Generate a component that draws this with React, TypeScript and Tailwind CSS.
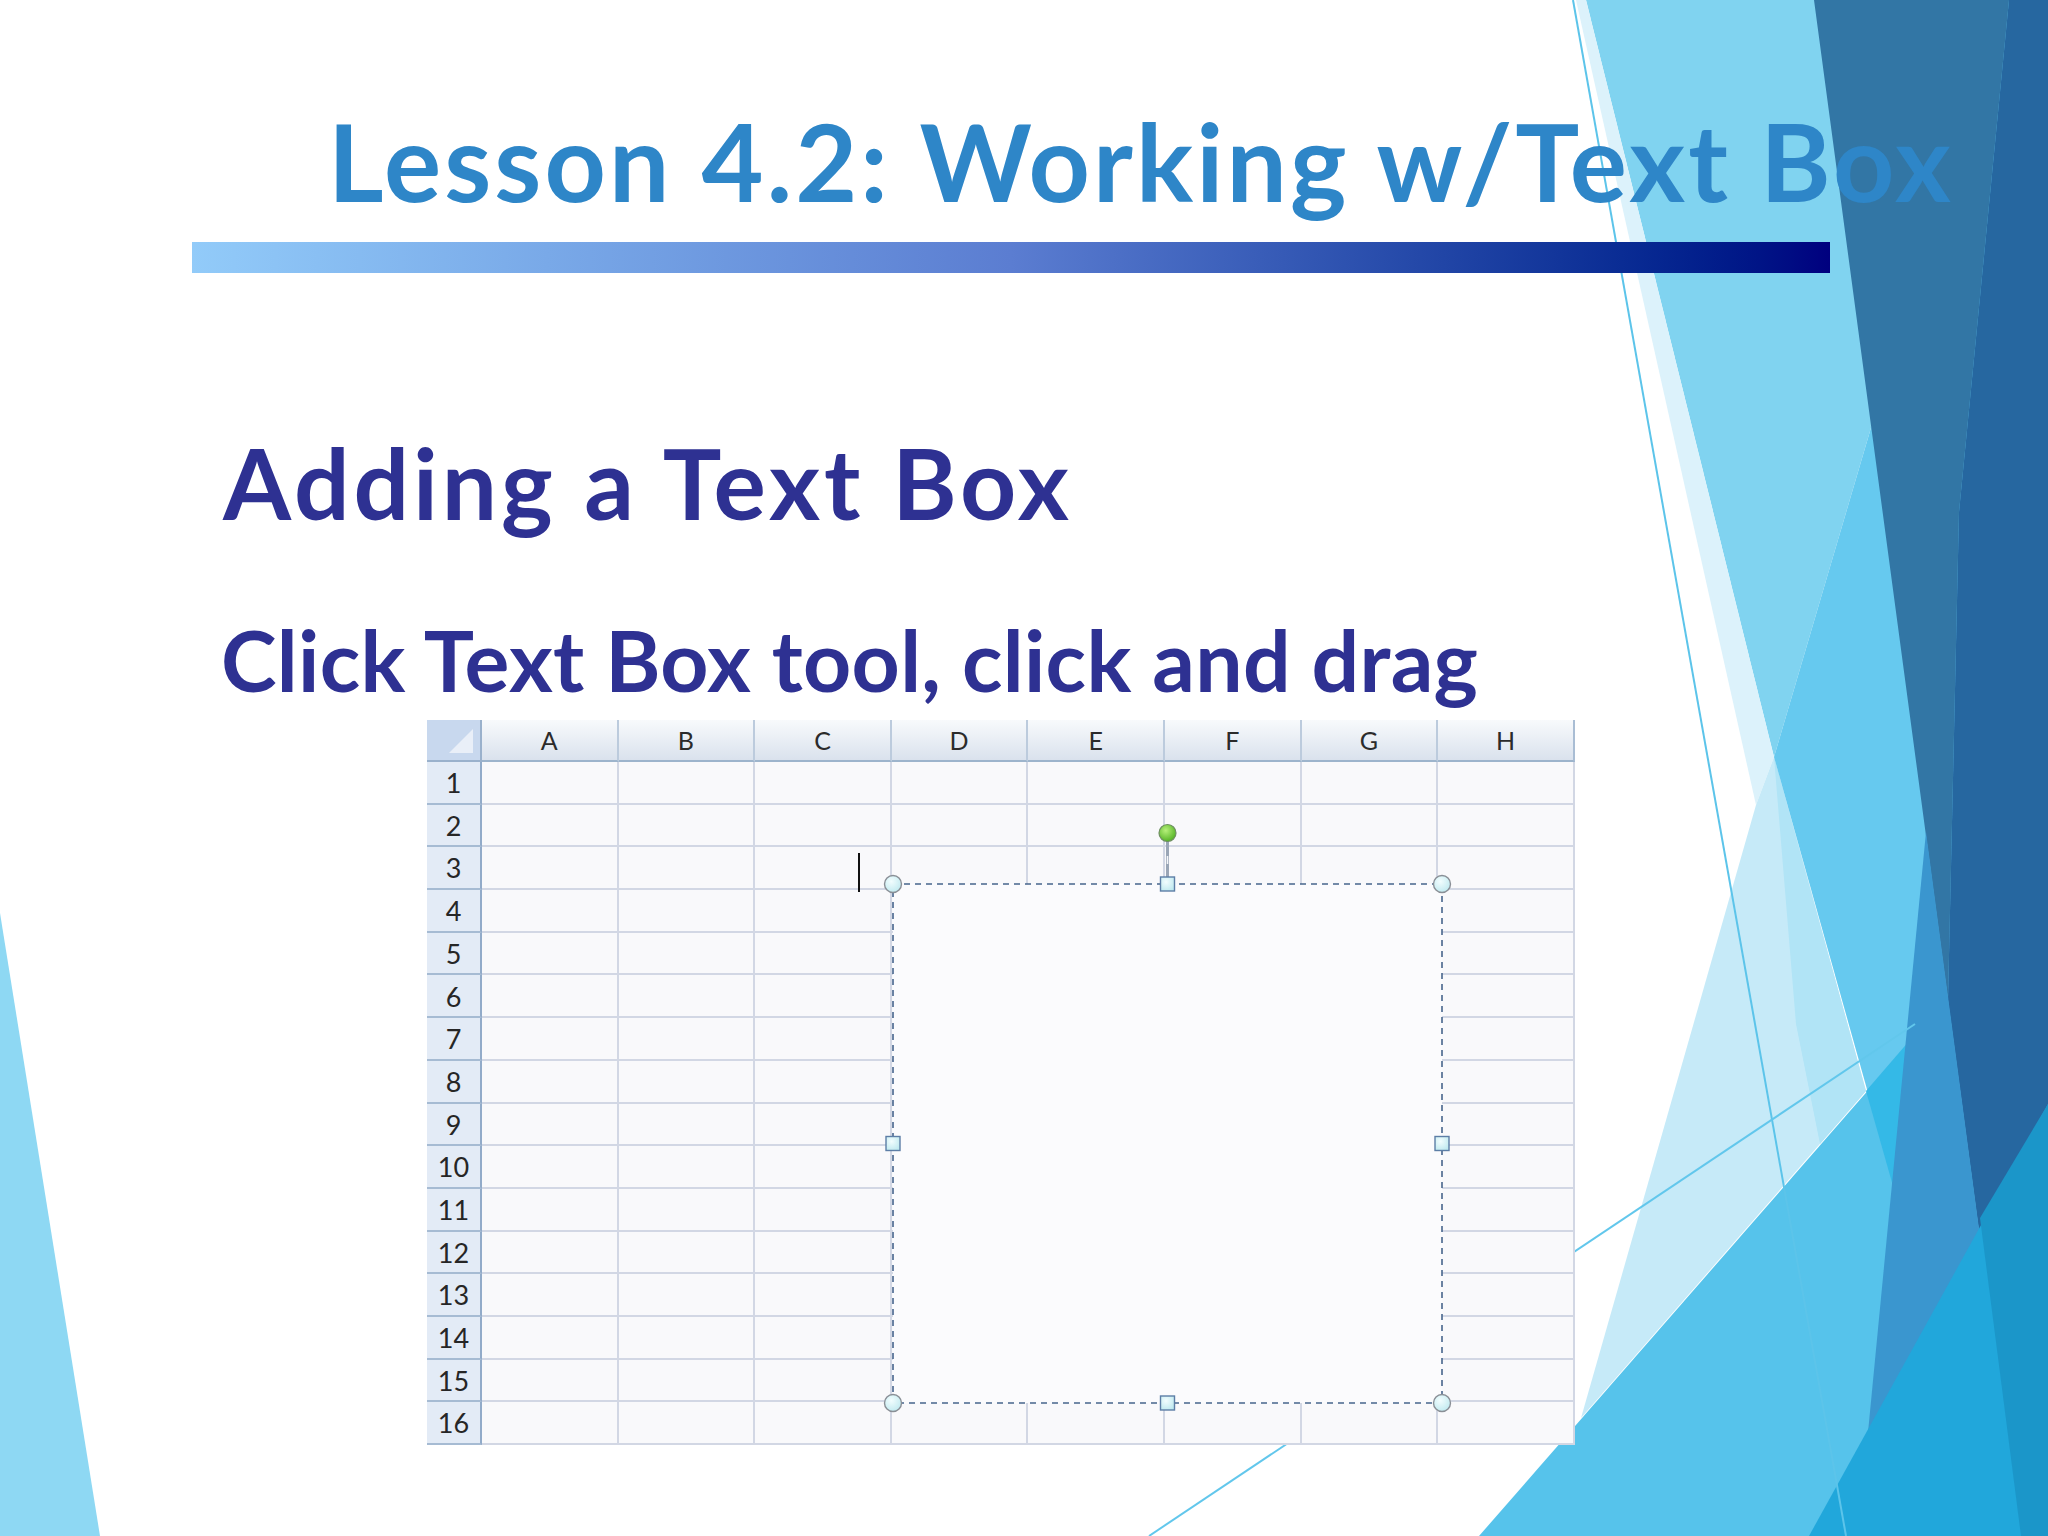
const COLS = ['A', 'B', 'C', 'D', 'E', 'F', 'G', 'H'];
const ROWS = Array.from({ length: 16 }, (_, i) => i + 1);

// slide theme decoration (facets on the right, sliver bottom-left)
function Backdrop() {
  return (
    <svg viewBox="0 0 2048 1536" className="absolute inset-0 h-full w-full">
      <polygon points="0,913 100,1536 0,1536" fill="#8ed8f3" />
      <polygon points="1586,0 1997,0 1774,757" fill="#80d3f0" />
      <polygon points="1576,0 1586,0 1774,757 1756,805" fill="#dcf2fb" />
      <polygon points="1756,805 1774,757 1866,1091 1581,1418" fill="#c6eaf8" />
      <polygon points="1774,757 1866,1091 1820,1144 1796,1024" fill="#b1e4f6" />
      <polygon points="1774,757 1997,0 2048,0 2048,1536 1992,1536" fill="#66c9ef" />
      <polygon points="1479,1536 1912,1040 1960,1536" fill="#56c3eb" />
      <polygon points="1866,1091 1910,1040 1893,1186" fill="#34b9e7" />
      <polygon points="1814,0 2009,0 1959,512 1948,1000" fill="#3276a5" />
      <polygon points="2009,0 2048,0 2048,1536 2020,1536 1948,1000 1959,512" fill="#2667a0" />
      <polygon points="1926,832 2020,1536 1858,1536" fill="#3a96cf" />
      <polygon points="2048,1104 1809,1536 2048,1536" fill="#21a7db" />
      <polygon points="1980,1218 2048,1104 2048,1536 2021,1536" fill="#1b96c9" />
      <line x1="1573" y1="0" x2="1846" y2="1536" stroke="#5cc4ea" strokeWidth="2" />
      <line x1="1149" y1="1536" x2="1915" y2="1024" stroke="#62c7ec" strokeWidth="2" />
    </svg>
  );
}

function SelectionOverlay() {
  const x0 = 466;
  const y0 = 164;
  const x1 = 1015;
  const y1 = 683;
  const mx = (x0 + x1) / 2;
  const my = (y0 + y1) / 2;
  const corners = [
    [x0, y0],
    [x1, y0],
    [x0, y1],
    [x1, y1],
  ];
  const sides = [
    [mx, y0],
    [mx, y1],
    [x0, my],
    [x1, my],
  ];
  return (
    <svg className="absolute left-0 top-0 h-[726px] w-[1148px]" viewBox="0 0 1148 726">
      <defs>
        <radialGradient id="hc" cx="40%" cy="35%" r="70%">
          <stop offset="0%" stopColor="#f2fdfe" />
          <stop offset="100%" stopColor="#bfe9ef" />
        </radialGradient>
        <radialGradient id="gr" cx="40%" cy="35%" r="70%">
          <stop offset="0%" stopColor="#b6f07a" />
          <stop offset="100%" stopColor="#4fb020" />
        </radialGradient>
      </defs>
      <rect x={x0} y={y0} width={x1 - x0} height={y1 - y0} fill="#fbfbfd" stroke="#47658c" strokeWidth="1.6" strokeDasharray="6 5" />
      <line x1={432} y1={133} x2={432} y2={172} stroke="#111" strokeWidth="2" />
      <line x1={mx} y1={121} x2={mx} y2={157} stroke="#9aa6b6" strokeWidth="3" />
      <line x1={mx} y1={136} x2={mx} y2={144} stroke="#f4f6f9" strokeWidth="1.5" />
      <circle cx={mx} cy={113} r={8.5} fill="url(#gr)" stroke="#6f8f62" strokeWidth="1.2" />
      {corners.map(([cx, cy]) => (
        <circle key={`${cx}-${cy}`} cx={cx} cy={cy} r={8.5} fill="url(#hc)" stroke="#8a8f96" strokeWidth="1.4" />
      ))}
      {sides.map(([cx, cy]) => (
        <rect key={`${cx}-${cy}`} x={cx - 7} y={cy - 7} width={14} height={14} fill="url(#hc)" stroke="#5d7ea6" strokeWidth="1.4" />
      ))}
    </svg>
  );
}

function Sheet() {
  return (
    <div className="relative ml-[427px] mt-[18px] w-[1148px]">
      <div className="grid grid-cols-[55px_repeat(8,136.6px)] grid-rows-[42px_repeat(16,42.7px)]">
        <div className="relative border-b-2 border-r-2 border-[#9ab1cc] bg-[#c8d8ee]">
          <svg className="absolute inset-0 h-full w-full" viewBox="0 0 53 40">
            <polygon points="22,33 46,9 46,33" fill="#e9eff8" />
          </svg>
        </div>
        {COLS.map((c, i) => (
          <div
            key={c}
            className={`flex items-center justify-center border-b-2 border-b-[#9db4cc] bg-linear-to-b from-[#f8fafc] to-[#dae2ed] pt-[2px] text-[25px] text-[#2b2b2b] ${
              i === COLS.length - 1 ? 'border-r-2 border-r-[#a9bdd4]' : 'border-r-2 border-r-[#bccbdd]'
            }`}
          >
            {c}
          </div>
        ))}
        {ROWS.map((r) => (
          <div key={r} className="contents">
            <div className="flex items-center justify-center border-b-2 border-r-2 border-b-[#a6bbd3] border-r-[#92abc9] bg-[#e3ebf6] pt-[2px] text-[27px] text-[#262626]">
              {r}
            </div>
            {COLS.map((c) => (
              <div key={c} className="border-b-2 border-r-2 border-[#d2d7e4] bg-[#f9f9fb]" />
            ))}
          </div>
        ))}
      </div>
      <SelectionOverlay />
    </div>
  );
}

export default function App() {
  return (
    <div className="relative h-[1536px] w-[2048px] overflow-hidden bg-white font-['Lato',sans-serif]">
      <Backdrop />
      <div className="relative z-10 flex flex-col items-start pt-[107px]">
        <h1 className="ml-[328px] whitespace-nowrap text-[107px] font-bold leading-none tracking-[3.1px] text-[#2e86c8]">
          Lesson 4.2: Working w/Text Box
        </h1>
        <div className="ml-[192px] mt-[28px] h-[31px] w-[1638px] bg-linear-to-r from-[#92cbf9] via-[#5b7dd1] to-[#00007f]" />
        <h2 className="ml-[223px] mt-[160px] whitespace-nowrap text-[98px] font-bold leading-none tracking-[3.9px] text-[#2e3192]">
          Adding a Text Box
        </h2>
        <p className="ml-[221px] mt-[87px] whitespace-nowrap text-[84px] font-bold leading-none tracking-[0.3px] text-[#2e3192]">
          Click Text Box tool, click and drag
        </p>
        <Sheet />
      </div>
    </div>
  );
}
